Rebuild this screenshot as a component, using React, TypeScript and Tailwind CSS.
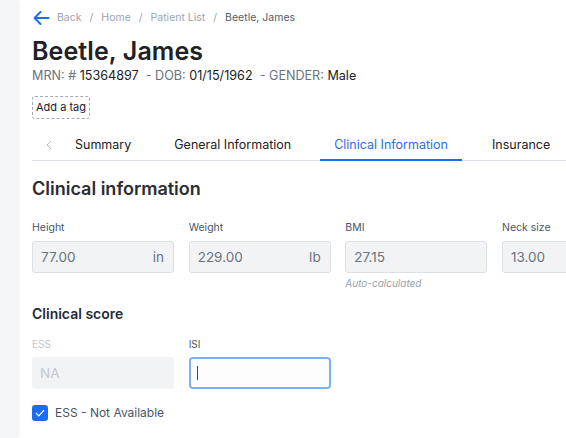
import React from "react";

export default function App() {
  const font = { fontFamily: "Inter, 'Noto Sans', sans-serif" };
  return (
    <div className="w-[566px] h-[438px] overflow-hidden flex bg-white" style={font}>
      <div className="w-[17px] shrink-0 bg-[#f4f5f7] shadow-[2px_0_3px_rgba(0,0,0,0.06)] z-10" />
      <div className="flex-1 min-w-0 pl-[15px] pt-[9px]">
        <div className="flex items-center h-[18px] text-[10.5px] text-[#9ca3af]">
          <svg width="18" height="16" viewBox="0 0 18 16" className="mr-[7px]">
            <path d="M16.5 8H2.5M8.5 2L2.5 8L8.5 14" stroke="#1a6df0" strokeWidth="2" fill="none" strokeLinecap="round" strokeLinejoin="round" />
          </svg>
          <span>Back</span>
          <span className="mx-[8px]">/</span>
          <span>Home</span>
          <span className="mx-[8px]">/</span>
          <span>Patient List</span>
          <span className="mx-[8px]">/</span>
          <span className="text-[#555c66]">Beetle, James</span>
        </div>
        <div className="mt-[9px] text-[25px] leading-[30px] font-semibold text-[#202124] tracking-[0.1px]">Beetle, James</div>
        <div className="mt-[2px] text-[12.6px] leading-[16px] text-[#6b7280]">
          MRN: # <span className="text-[#202124]">15364897</span>&nbsp; - DOB: <span className="text-[#202124]">01/15/1962</span>&nbsp; - GENDER: <span className="text-[#202124]">Male</span>
        </div>
        <div className="mt-[12px] h-[23px] w-[58px] border border-dashed border-[#a3a9b5] rounded-[3px] flex items-center justify-center text-[11px] text-[#202124]">
          Add a tag
        </div>
        <div className="mt-[11px] flex items-end h-[31px] border-b border-[#dde1e8] text-[12.5px] text-[#202124] pl-[14px]">
          <div className="h-full flex items-center text-[#c0c4cc]">
            <svg width="6" height="10" viewBox="0 0 6 10"><path d="M5 1L1 5L5 9" stroke="#b8bcc4" strokeWidth="1" fill="none" /></svg>
          </div>
          <div className="h-full flex items-center ml-[23px]">Summary</div>
          <div className="h-full flex items-center ml-[43px]">General Information</div>
          <div className="h-full flex items-center ml-[29px] px-[14px] text-[#2d6be4] border-b-2 border-[#1a6df0] -mb-px">Clinical Information</div>
          <div className="h-full flex items-center ml-[30px]">Insurance</div>
        </div>
        <div className="mt-[16px] text-[18px] leading-[24px] font-semibold text-[#2a2d33]">Clinical information</div>
        <div className="mt-[20px] grid grid-cols-[142px_142px_142px_142px] gap-x-[14.67px]">
          {[
            { l: "Height", v: "77.00", u: "in" },
            { l: "Weight", v: "229.00", u: "lb" },
            { l: "BMI", v: "27.15", u: "" },
            { l: "Neck size", v: "13.00", u: "" },
          ].map((f) => (
            <div key={f.l} className="flex flex-col">
              <div className="text-[10.5px] leading-[14px] text-[#4b5567]">{f.l}</div>
              <div className="mt-[6px] h-[32px] rounded-[3px] border border-[#dcdfe4] bg-[#f2f3f5] flex items-center justify-between pl-[8px] pr-[9px] text-[13.5px] text-[#6b7280]">
                <span>{f.v}</span>
                <span>{f.u}</span>
              </div>
              {f.l === "BMI" && (
                <div className="mt-[3px] text-[10px] italic text-[#9aa0aa]">Auto-calculated</div>
              )}
            </div>
          ))}
        </div>
        <div className="mt-[13px] text-[14px] leading-[20px] font-semibold text-[#1f2a3c]">Clinical score</div>
        <div className="mt-[13px] grid grid-cols-[142px_142px] gap-x-[14.67px]">
          <div className="flex flex-col">
            <div className="text-[10px] leading-[14px] text-[#c4c8cf]">ESS</div>
            <div className="mt-[6px] h-[32px] rounded-[3px] bg-[#f2f3f5] flex items-center pl-[8px] text-[13.5px] text-[#c4c8cf]">NA</div>
          </div>
          <div className="flex flex-col">
            <div className="text-[10px] leading-[14px] text-[#4b5567]">ISI</div>
            <div className="mt-[6px] h-[32px] rounded-[4px] border-2 border-[#7fb0f5] bg-[#fdfdfe] flex items-center pl-[6px]">
              <div className="w-[1px] h-[14px] bg-[#3a4a66]" />
            </div>
          </div>
        </div>
        <div className="mt-[15px] flex items-center">
          <div className="w-[16px] h-[16px] rounded-[3px] bg-[#1a6df0] flex items-center justify-center">
            <svg width="10" height="8" viewBox="0 0 10 8"><path d="M1 4L3.8 6.8L9 1.2" stroke="white" strokeWidth="1.2" fill="none" /></svg>
          </div>
          <span className="ml-[7px] text-[12px] text-[#4b5567]">ESS - Not Available</span>
        </div>
      </div>
    </div>
  );
}
